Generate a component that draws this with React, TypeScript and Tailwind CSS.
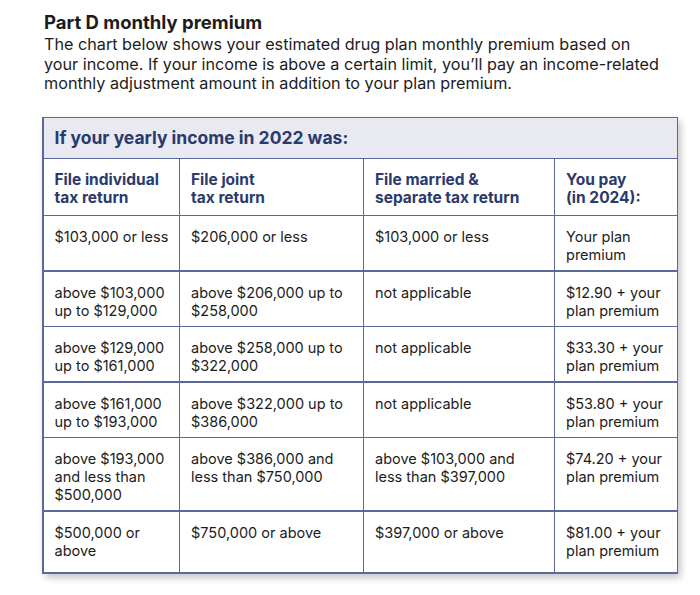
import React from "react";

const rows: string[][] = [
  ["$103,000 or less", "$206,000 or less", "$103,000 or less", "Your plan premium"],
  ["above $103,000 up to $129,000", "above $206,000 up to $258,000", "not applicable", "$12.90 + your plan premium"],
  ["above $129,000 up to $161,000", "above $258,000 up to $322,000", "not applicable", "$33.30 + your plan premium"],
  ["above $161,000 up to $193,000", "above $322,000 up to $386,000", "not applicable", "$53.80 + your plan premium"],
  ["above $193,000 and less than $500,000", "above $386,000 and less than $750,000", "above $103,000 and less than $397,000", "$74.20 + your plan premium"],
  ["$500,000 or above", "$750,000 or above", "$397,000 or above", "$81.00 + your plan premium"],
];

const heads = [
  ["File individual", "tax return"],
  ["File joint", "tax return"],
  ["File married &", "separate tax return"],
  ["You pay", "(in 2024):"],
];

const pr = ["pr-[4px]", "pr-[8px]", "pr-[18px]", "pr-[6px]"];

export default function App() {
  return (
    <div className="w-[700px] h-[595px] bg-white text-[#1c1c1c] font-['Inter',sans-serif] overflow-hidden">
      <div className="pl-[44px] pt-[11px]">
        <h1 className="text-[18.5px] leading-[22px] font-bold">Part D monthly premium</h1>
        <p className="mt-[2px] w-[620px] text-[16.2px] leading-[19.5px]">
          The chart below shows your estimated drug plan monthly premium based on your income. If your income is above a certain limit, you’ll pay an income-related monthly adjustment amount in addition to your plan premium.
        </p>
      </div>
      <div className="ml-[42px] mt-[23px] w-[636px] bg-[#5a699a] p-[1.5px] shadow-[3px_4px_7px_rgba(0,0,0,0.22)]">
        <div className="grid grid-cols-[135px_182.5px_189.5px_1fr] gap-[1.5px]">
          <div className="col-span-4 h-[39.5px] bg-[#e8e9f1] flex items-center px-[11px]">
            <span className="text-[17.5px] font-bold text-[#2b3a6c]">If your yearly income in 2022 was:</span>
          </div>
          {heads.map((h, i) => (
            <div key={i} className="bg-white pl-[11px] pr-[4px] pt-[12px] pb-[7.5px] text-[15.5px] leading-[18px] font-bold text-[#2b3a6c]">
              <div>{h[0]}</div>
              <div>{h[1]}</div>
            </div>
          ))}
          {rows.map((r, ri) =>
            r.map((c, ci) => (
              <div
                key={ri + "-" + ci}
                className={
                  "bg-white pl-[11px] pt-[12px] text-[14.5px] leading-[18px] " +
                  pr[ci] +
                  " " +
                  (ri === rows.length - 1 ? "pb-[12.5px]" : "pb-[6px]")
                }
              >
                {c}
              </div>
            ))
          )}
        </div>
      </div>
    </div>
  );
}
